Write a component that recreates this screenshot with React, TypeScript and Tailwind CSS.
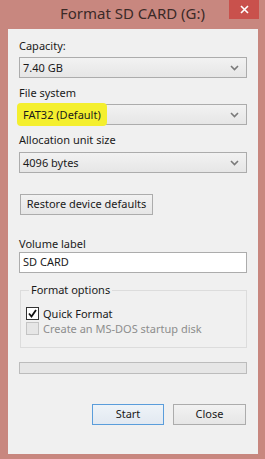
const Chevron = () => (
  <svg width="9" height="6" viewBox="0 0 9 6" className="shrink-0">
    <path d="M1 1 L4.5 4.5 L8 1" fill="none" stroke="#7a7a7a" strokeWidth="1.6" />
  </svg>
);

const Select = ({ children }: { children: React.ReactNode }) => (
  <div className="relative flex items-center justify-between h-[21px] border border-[#acacac] bg-gradient-to-b from-[#f2f2f2] to-[#e6e6e6] pl-[3px] pr-[7px]">
    <span className="text-[11px] leading-[15px] text-[#1a1a1a]">{children}</span>
    <Chevron />
  </div>
);

const Label = ({ children, className = "" }: { children: React.ReactNode; className?: string }) => (
  <div className={`h-[16px] leading-[16px] text-[11px] text-[#1a1a1a] ${className}`}>{children}</div>
);

const Button = ({ children, primary = false, className = "" }: { children: React.ReactNode; primary?: boolean; className?: string }) => (
  <div
    className={`flex items-center justify-center h-[21px] border text-[11px] text-[#1a1a1a] ${
      primary
        ? "border-[#5a9ddb] bg-gradient-to-b from-[#eef3f8] to-[#e2e9f1]"
        : "border-[#acacac] bg-gradient-to-b from-[#f2f2f2] to-[#e6e6e6]"
    } ${className}`}
  >
    {children}
  </div>
);

export default function App() {
  return (
    <div
      className="w-[265px] h-[459px] bg-[#c8877f] flex flex-col overflow-hidden"
      style={{ fontFamily: '"Noto Sans", "Open Sans", sans-serif' }}
    >
      {/* Title bar */}
      <div className="relative h-[29px] flex items-start justify-center">
        <span className="mt-[3px] text-[15px] leading-[20px] text-[#3b2a27]">Format SD CARD (G:)</span>
        <div className="absolute right-[6px] top-0 w-[30px] h-[19px] bg-[#c9514c] flex items-center justify-center">
          <svg width="9" height="9" viewBox="0 0 9 9">
            <path d="M1 1 L8 8 M8 1 L1 8" stroke="#fff" strokeWidth="1.6" />
          </svg>
        </div>
      </div>

      {/* Panel */}
      <div className="ml-[8px] mr-[7px] h-[425px] bg-[#f0f0f0] px-[11px] pt-[9px] flex flex-col">
        <Label>Capacity:</Label>
        <div className="mt-[3px]">
          <Select>7.40 GB</Select>
        </div>

        <Label className="mt-[7px]">File system</Label>
        <div className="mt-[3px]">
          <Select>
            <span className="relative inline-block -ml-[6px] -my-[4px] px-[6px] py-[4px] rounded-[4px] bg-[#f4ef2e]">
              FAT32 (Default)
            </span>
          </Select>
        </div>

        <Label className="mt-[7px]">Allocation unit size</Label>
        <div className="mt-[4px]">
          <Select>4096 bytes</Select>
        </div>

        <Button className="mt-[21px] ml-[1px] w-[133px]">Restore device defaults</Button>

        <Label className="mt-[21px]">Volume label</Label>
        <div className="h-[21px] border border-[#acacac] bg-white pl-[3px] flex items-center text-[11px] text-[#1a1a1a]">
          SD CARD
        </div>

        <fieldset className="mt-[9px] ml-[1px] h-[66px] border border-[#dcdcdc] pl-[5px]">
          <legend className="ml-[3px] px-[2px] text-[11px] leading-[16px] text-[#1a1a1a]">Format options</legend>
          <div className="mt-[9px] flex items-center gap-[4px] h-[13px]">
            <div className="w-[13px] h-[13px] border border-[#333] bg-white flex items-center justify-center">
              <svg width="11" height="11" viewBox="0 0 11 11">
                <path d="M2 5.5 L4.5 8.5 L9 2" fill="none" stroke="#111" strokeWidth="1.8" />
              </svg>
            </div>
            <span className="text-[11px] leading-[13px] text-[#1a1a1a]">Quick Format</span>
          </div>
          <div className="mt-[2px] flex items-center gap-[4px] h-[13px]">
            <div className="w-[13px] h-[13px] border border-[#c4c4c4] bg-[#e6e6e6]" />
            <span className="text-[11px] leading-[13px] text-[#8d8d8d]">Create an MS-DOS startup disk</span>
          </div>
        </fieldset>

        <div className="mt-[14px] h-[12px] border border-[#bcbcbc] bg-[#e6e6e6]" />

        <div className="mt-[30px] flex justify-end gap-[9px] pr-[1px]">
          <Button primary className="w-[72px]">Start</Button>
          <Button className="w-[73px]">Close</Button>
        </div>
      </div>
    </div>
  );
}
